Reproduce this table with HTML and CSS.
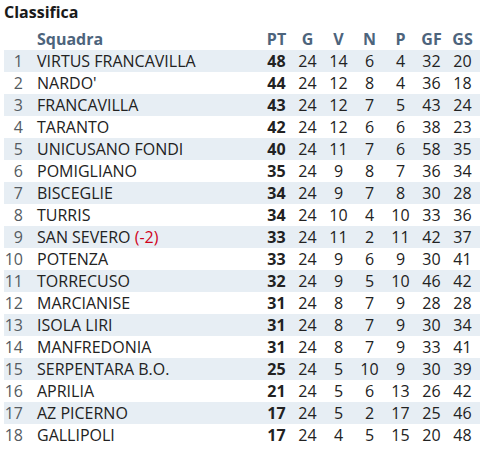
FILE: index.html
```html
<!DOCTYPE html>
<html lang="it">
<head>
<meta charset="utf-8">
<link rel="stylesheet" href="styles.css">
</head>
<body>
<div class="widget">
  <h2 class="title">Classifica</h2>
  <table class="standings">
    <thead>
      <tr>
        <th class="pos"></th>
        <th class="team">Squadra</th>
        <th>PT</th><th>G</th><th>V</th><th>N</th><th>P</th><th>GF</th><th>GS</th>
      </tr>
    </thead>
    <tbody>
      <tr><td class="pos">1</td><td class="team">VIRTUS FRANCAVILLA</td><td class="pt">48</td><td>24</td><td>14</td><td>6</td><td>4</td><td>32</td><td>20</td></tr>
      <tr><td class="pos">2</td><td class="team">NARDO'</td><td class="pt">44</td><td>24</td><td>12</td><td>8</td><td>4</td><td>36</td><td>18</td></tr>
      <tr><td class="pos">3</td><td class="team">FRANCAVILLA</td><td class="pt">43</td><td>24</td><td>12</td><td>7</td><td>5</td><td>43</td><td>24</td></tr>
      <tr><td class="pos">4</td><td class="team">TARANTO</td><td class="pt">42</td><td>24</td><td>12</td><td>6</td><td>6</td><td>38</td><td>23</td></tr>
      <tr><td class="pos">5</td><td class="team">UNICUSANO FONDI</td><td class="pt">40</td><td>24</td><td>11</td><td>7</td><td>6</td><td>58</td><td>35</td></tr>
      <tr><td class="pos">6</td><td class="team">POMIGLIANO</td><td class="pt">35</td><td>24</td><td>9</td><td>8</td><td>7</td><td>36</td><td>34</td></tr>
      <tr><td class="pos">7</td><td class="team">BISCEGLIE</td><td class="pt">34</td><td>24</td><td>9</td><td>7</td><td>8</td><td>30</td><td>28</td></tr>
      <tr><td class="pos">8</td><td class="team">TURRIS</td><td class="pt">34</td><td>24</td><td>10</td><td>4</td><td>10</td><td>33</td><td>36</td></tr>
      <tr><td class="pos">9</td><td class="team">SAN SEVERO <span class="penalty">(-2)</span></td><td class="pt">33</td><td>24</td><td>11</td><td>2</td><td>11</td><td>42</td><td>37</td></tr>
      <tr><td class="pos">10</td><td class="team">POTENZA</td><td class="pt">33</td><td>24</td><td>9</td><td>6</td><td>9</td><td>30</td><td>41</td></tr>
      <tr><td class="pos">11</td><td class="team">TORRECUSO</td><td class="pt">32</td><td>24</td><td>9</td><td>5</td><td>10</td><td>46</td><td>42</td></tr>
      <tr><td class="pos">12</td><td class="team">MARCIANISE</td><td class="pt">31</td><td>24</td><td>8</td><td>7</td><td>9</td><td>28</td><td>28</td></tr>
      <tr><td class="pos">13</td><td class="team">ISOLA LIRI</td><td class="pt">31</td><td>24</td><td>8</td><td>7</td><td>9</td><td>30</td><td>34</td></tr>
      <tr><td class="pos">14</td><td class="team">MANFREDONIA</td><td class="pt">31</td><td>24</td><td>8</td><td>7</td><td>9</td><td>33</td><td>41</td></tr>
      <tr><td class="pos">15</td><td class="team">SERPENTARA B.O.</td><td class="pt">25</td><td>24</td><td>5</td><td>10</td><td>9</td><td>30</td><td>39</td></tr>
      <tr><td class="pos">16</td><td class="team">APRILIA</td><td class="pt">21</td><td>24</td><td>5</td><td>6</td><td>13</td><td>26</td><td>42</td></tr>
      <tr><td class="pos">17</td><td class="team">AZ PICERNO</td><td class="pt">17</td><td>24</td><td>5</td><td>2</td><td>17</td><td>25</td><td>46</td></tr>
      <tr><td class="pos">18</td><td class="team">GALLIPOLI</td><td class="pt">17</td><td>24</td><td>4</td><td>5</td><td>15</td><td>20</td><td>48</td></tr>
    </tbody>
  </table>
</div>
</body>
</html>
```

FILE: styles.css
```css
html, body {
  margin: 0;
  padding: 0;
  background: #ffffff;
}

body {
  font-family: "Open Sans", "Liberation Sans", sans-serif;
  font-size: 16px;
  color: #222222;
}

.widget {
  padding: 1px 4px 0 4px;
}

.title {
  margin: 0 0 5px 0;
  font-size: 16px;
  line-height: 22px;
  font-weight: 700;
  color: #1a1a1a;
}

.standings {
  border-collapse: collapse;
  border-spacing: 0;
  width: 476px;
}

.standings th,
.standings td {
  padding: 0;
  height: 22px;
  line-height: 22px;
  text-align: center;
  width: 31px;
  white-space: nowrap;
}

.standings th:last-child,
.standings td:last-child {
  padding-right: 2px;
}

.standings th {
  font-weight: 700;
  color: #4d647c;
}

.standings .pos {
  width: 19px;
  text-align: right;
  color: #555b61;
}

.standings .team {
  width: auto;
  text-align: left;
  padding-left: 14px;
}

.standings tbody tr:nth-child(odd) {
  background: #e7eef4;
}

.standings .pt {
  font-weight: 700;
}

.penalty {
  color: #d0021b;
}
```
